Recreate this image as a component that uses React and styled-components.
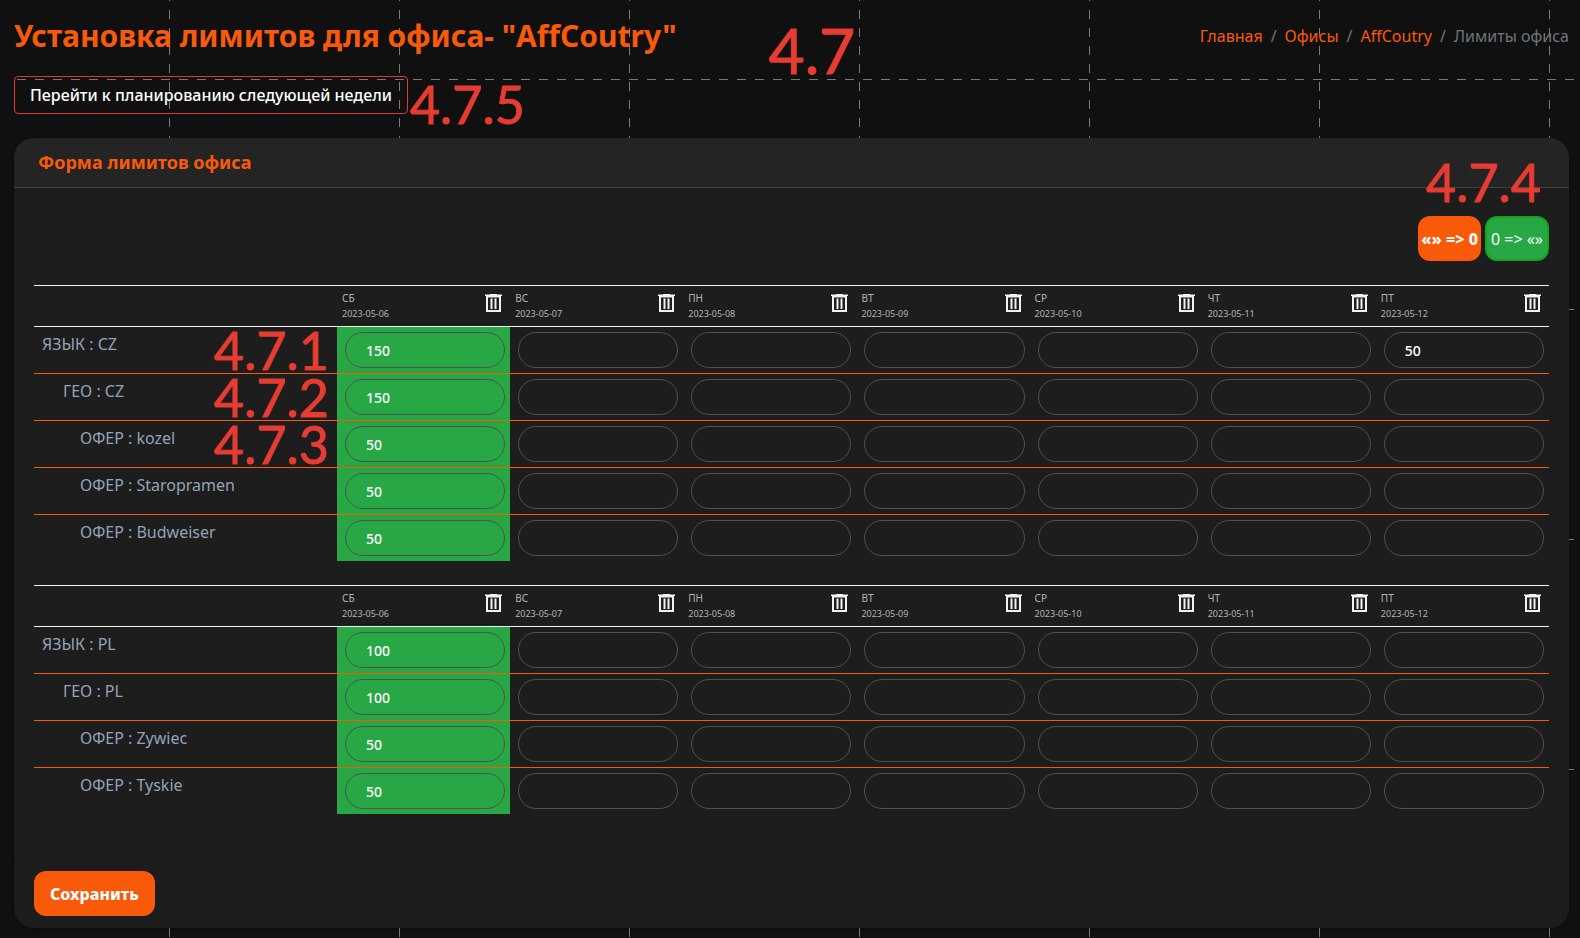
import React, { useState } from 'react'
import styled, { createGlobalStyle } from 'styled-components'

const days = [
  { name: 'СБ', date: '2023-05-06' },
  { name: 'ВС', date: '2023-05-07' },
  { name: 'ПН', date: '2023-05-08' },
  { name: 'ВТ', date: '2023-05-09' },
  { name: 'СР', date: '2023-05-10' },
  { name: 'ЧТ', date: '2023-05-11' },
  { name: 'ПТ', date: '2023-05-12' },
]

const groups = [
  {
    id: 'cz',
    rows: [
      { label: 'ЯЗЫК : CZ', level: 0, values: { 0: '150', 6: '50' }, mark: '4.7.1' },
      { label: 'ГЕО : CZ', level: 1, values: { 0: '150' }, mark: '4.7.2' },
      { label: 'ОФЕР : kozel', level: 2, values: { 0: '50' }, mark: '4.7.3' },
      { label: 'ОФЕР : Staropramen', level: 2, values: { 0: '50' } },
      { label: 'ОФЕР : Budweiser', level: 2, values: { 0: '50' } },
    ],
  },
  {
    id: 'pl',
    rows: [
      { label: 'ЯЗЫК : PL', level: 0, values: { 0: '100' } },
      { label: 'ГЕО : PL', level: 1, values: { 0: '100' } },
      { label: 'ОФЕР : Zywiec', level: 2, values: { 0: '50' } },
      { label: 'ОФЕР : Tyskie', level: 2, values: { 0: '50' } },
    ],
  },
]

const indents = ['8px', '29px', '46px']

const TrashIcon = () => (
  <svg width="17" height="18" viewBox="0 0 17 18" aria-hidden="true">
    <path d="M5 0h7v0.6h5V2H0V0.6h5z" fill="#f2f2f2" />
    <path d="M2 2v15h13V2.5H2" fill="none" stroke="#f2f2f2" strokeWidth="2" />
    <path d="M6.5 4.5v10.5M10.5 4.5v10.5" stroke="#f2f2f2" strokeWidth="2" />
  </svg>
)

const LimitsTable = ({ group }) => {
  const [rows, setRows] = useState(group.rows)

  const setValue = (row, day, value) =>
    setRows(rows.map((r, i) => (i === row ? { ...r, values: { ...r.values, [day]: value } } : r)))

  const clearDay = (day) =>
    setRows(rows.map((r) => ({ ...r, values: { ...r.values, [day]: '' } })))

  return (
    <TableStyled>
      <thead>
        <tr>
          <LabelHead />
          {days.map((day, i) => (
            <DayHead key={day.date} scope="col">
              <DayInner>
                <DayText>
                  <span>{day.name}</span>
                  <DateText>{day.date}</DateText>
                </DayText>
                <ClearButton
                  type="button"
                  aria-label={`Очистить ${day.date}`}
                  onClick={() => clearDay(i)}
                >
                  <TrashIcon />
                </ClearButton>
              </DayInner>
            </DayHead>
          ))}
        </tr>
      </thead>
      <tbody>
        {rows.map((row, r) => (
          <LimitRow key={row.label}>
            <RowLabel scope="row" $level={row.level}>
              {row.label}
              {row.mark && <RowMark>{row.mark}</RowMark>}
            </RowLabel>
            {days.map((day, d) => (
              <LimitCell key={day.date} $active={d === 0}>
                <LimitInput
                  type="text"
                  aria-label={`${row.label}, ${day.date}`}
                  value={row.values[d] || ''}
                  onChange={(e) => setValue(r, d, e.target.value)}
                />
              </LimitCell>
            ))}
          </LimitRow>
        ))}
      </tbody>
    </TableStyled>
  )
}

const App = () => {
  return (
    <>
      <GlobalStyle />
      <PageStyled>
        <HeaderStyled>
          <PageTitle>
            Установка лимитов для офиса- "AffCoutry"
            <TitleMark>4.7</TitleMark>
          </PageTitle>
          <Breadcrumb aria-label="breadcrumb">
            <a href="#home">Главная</a>
            <span>/</span>
            <a href="#offices">Офисы</a>
            <span>/</span>
            <a href="#office">AffCoutry</a>
            <span>/</span>
            <span>Лимиты офиса</span>
          </Breadcrumb>
        </HeaderStyled>
        <PlanLink href="#next-week">
          Перейти к планированию следующей недели
          <PlanMark>4.7.5</PlanMark>
        </PlanLink>
        <CardStyled>
          <CardHeader>
            <CardTitle>Форма лимитов офиса</CardTitle>
          </CardHeader>
          <CardBody>
            <Toolbar>
              <ToolbarMark>4.7.4</ToolbarMark>
              <FillButton type="button">«» =&gt; 0</FillButton>
              <FillButton type="button" $green>0 =&gt; «»</FillButton>
            </Toolbar>
            {groups.map((group) => (
              <LimitsTable key={group.id} group={group} />
            ))}
          </CardBody>
          <CardFooter>
            <SaveButton type="submit">Сохранить</SaveButton>
          </CardFooter>
        </CardStyled>
      </PageStyled>
    </>
  )
}

const GlobalStyle = createGlobalStyle`
  :root{
    --primary-color: #f95a0a;
    --success-color: #28a745;
    --danger-color: #dc3545;
    --muted-color: #6c757d;
    --line-color: #7c7a74;
    --mark-color: #e63c32;
  }
  *{
    box-sizing: border-box;
  }
  body{
    margin: 0;
    background-color: #101010;
    font-family: "Noto Sans", "Open Sans", sans-serif;
    font-size: 16px;
    line-height: 24px;
    color: #fff;
  }
  button, input{
    font-family: inherit;
  }
`;

const PageStyled = styled.div`
  position: relative;
  z-index: 0;
  min-height: 100vh;
  padding: 16px 11px 10px 14px;
  /* dashed grid: the gradient draws solid lines, the mask cuts them up */
  &::before, &::after{
    content: "";
    position: absolute;
    z-index: -1;
  }
  &::before{
    inset: -8px 0 1px 169px;
    background: repeating-linear-gradient(90deg, var(--line-color) 0 1px, transparent 1px 230px);
    mask: repeating-linear-gradient(180deg, #000 0 9px, transparent 9px 18px);
  }
  &::after{
    inset: 79px 6px 0 17px;
    background: repeating-linear-gradient(180deg, var(--line-color) 0 1px, transparent 1px 230px);
    mask: repeating-linear-gradient(90deg, #000 0 9px, transparent 9px 18px);
  }
`;

const HeaderStyled = styled.header`
  display: flex;
  justify-content: space-between;
  align-items: center;
  margin-bottom: 20px;
`;

const PageTitle = styled.h1`
  position: relative;
  margin: 0;
  font-size: 30px;
  font-weight: 700;
  line-height: 40px;
  color: var(--primary-color);
`;

const Breadcrumb = styled.nav`
  display: flex;
  gap: 8px;
  color: var(--muted-color);
  a{
    color: var(--primary-color);
    text-decoration: none;
  }
`;

/* section numbers float over the page */
const Mark = styled.span`
  position: absolute;
  font-family: Lato, sans-serif;
  font-size: 52px;
  font-weight: 400;
  line-height: 52px;
  color: var(--mark-color);
  -webkit-text-stroke: 1px var(--mark-color);
  white-space: nowrap;
  pointer-events: none;
`;

const TitleMark = styled(Mark)`
  left: calc(100% + 92px);
  top: 8px;
  font-size: 62px;
`;

const PlanMark = styled(Mark)`
  left: calc(100% + 3px);
  top: 1px;
`;

const ToolbarMark = styled(Mark)`
  right: 8px;
  bottom: calc(100% + 8px);
`;

const RowMark = styled(Mark)`
  right: 8px;
  top: -3px;
`;

const PlanLink = styled.a`
  position: relative;
  display: inline-block;
  padding: 6px 15px;
  border: 1px solid var(--danger-color);
  border-radius: 4px;
  color: #fff;
  font-weight: 500;
  text-decoration: none;
`;

const CardStyled = styled.form`
  margin-top: 24px;
  border-radius: 20px;
  background-color: #1d1d1d;
  box-shadow: 0 0 1px rgba(0, 0, 0, 0.13), 0 1px 3px rgba(0, 0, 0, 0.2);
`;

const CardHeader = styled.div`
  padding: 12px 24px 13px;
  border-bottom: 1px solid #404040;
  border-radius: 20px 20px 0 0;
  background-color: #242424;
`;

const CardTitle = styled.h2`
  margin: 0;
  font-size: 18px;
  font-weight: 700;
  line-height: 24px;
  color: var(--primary-color);
`;

const CardBody = styled.div`
  padding: 28px 20px 44px;
`;

const Toolbar = styled.div`
  position: relative;
  display: flex;
  justify-content: flex-end;
  gap: 4px;
  margin-bottom: 24px;
`;

const Button = styled.button`
  height: 45px;
  border: 2px solid var(--primary-color);
  border-radius: 12px;
  background-color: var(--primary-color);
  color: #fff;
  font-size: 16px;
  font-weight: 800;
  cursor: pointer;
`;

const FillButton = styled(Button)`
  padding: 0 ${({ $green }) => ($green ? '4px' : '1px')};
  font-weight: ${({ $green }) => ($green ? 400 : 800)};
  background-color: ${({ $green }) => ($green ? 'var(--success-color)' : 'var(--primary-color)')};
  border-color: ${({ $green }) => ($green ? '#12a51e' : 'var(--primary-color)')};
`;

const SaveButton = styled(Button)`
  padding: 0 14px;
`;

const TableStyled = styled.table`
  width: 100%;
  table-layout: fixed;
  border-collapse: collapse;
  & + &{
    margin-top: 24px;
  }
  thead tr{
    border-top: 1px solid #f0f0f0;
    border-bottom: 1px solid #f0f0f0;
  }
`;

const LabelHead = styled.td`
  width: 20%;
  padding: 0;
`;

const DayHead = styled.th`
  height: 41px;
  padding: 0 8px 0 5px;
  font-size: 10px;
  font-weight: 400;
  line-height: 15px;
  text-align: left;
  color: #b4b4b4;
`;

const DayInner = styled.div`
  display: flex;
  justify-content: space-between;
  align-items: center;
`;

const DayText = styled.div`
  display: flex;
  flex-direction: column;
`;

const DateText = styled.span`
  font-size: 9px;
`;

const ClearButton = styled.button`
  display: flex;
  padding: 0 0 6px;
  border: 0;
  background: none;
  cursor: pointer;
`;

const LimitRow = styled.tr`
  & + &{
    border-top: 1px solid var(--primary-color);
  }
`;

const RowLabel = styled.th`
  position: relative;
  padding: 5px 8px 5px ${({ $level }) => indents[$level]};
  font-weight: 400;
  text-align: left;
  vertical-align: top;
  color: #94a3b8;
`;

const LimitCell = styled.td`
  padding: 5px 5px 5px 8px;
  background-color: ${({ $active }) => ($active ? 'var(--success-color)' : 'transparent')};
`;

const LimitInput = styled.input`
  display: block;
  width: 100%;
  height: 36px;
  padding: 0 20px;
  border: 1px solid #505050;
  border-radius: 18px;
  background: transparent;
  color: #fff;
  font-size: 14px;
  font-weight: 500;
  outline: none;
`;

const CardFooter = styled.div`
  padding: 12px 20px;
  border-top: 1px solid #191919;
  border-radius: 0 0 20px 20px;
  background-color: #1c1c1c;
`;

export default App
